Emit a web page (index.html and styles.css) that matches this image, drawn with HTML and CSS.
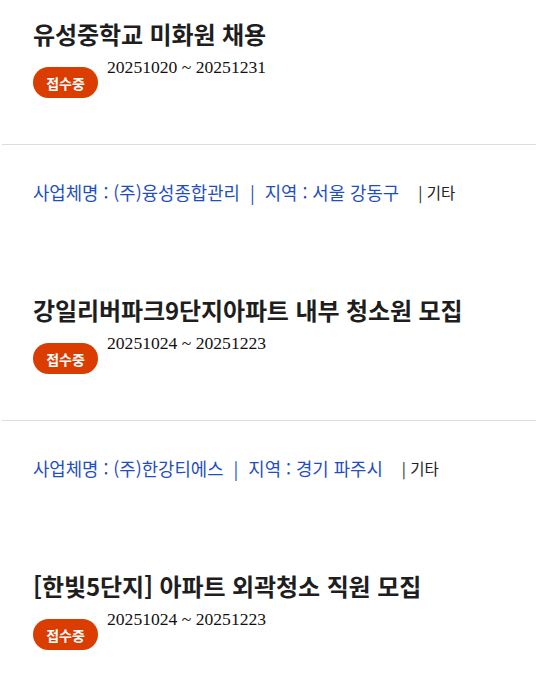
FILE: index.html
```html
<!DOCTYPE html>
<html lang="ko">
<head>
<meta charset="utf-8">
<link rel="stylesheet" href="styles.css">
</head>
<body>
<ul class="list">
  <li class="item">
    <div class="head">
      <h2 class="title">유성중학교 미화원 채용</h2>
      <div class="meta">
        <span class="badge">접수중</span>
        <span class="date">20251020 ~ 20251231</span>
      </div>
    </div>
    <div class="info">
      <span class="blue">사업체명 : (주)융성종합관리</span><span class="blue sep">|</span><span class="blue">지역 : 서울 강동구</span><span class="etc">| 기타</span>
    </div>
  </li>
  <li class="item">
    <div class="head">
      <h2 class="title">강일리버파크9단지아파트 내부 청소원 모집</h2>
      <div class="meta">
        <span class="badge">접수중</span>
        <span class="date">20251024 ~ 20251223</span>
      </div>
    </div>
    <div class="info">
      <span class="blue">사업체명 : (주)한강티에스</span><span class="blue sep">|</span><span class="blue">지역 : 경기 파주시</span><span class="etc">| 기타</span>
    </div>
  </li>
  <li class="item">
    <div class="head">
      <h2 class="title">[한빛5단지] 아파트 외곽청소 직원 모집</h2>
      <div class="meta">
        <span class="badge">접수중</span>
        <span class="date">20251024 ~ 20251223</span>
      </div>
    </div>
  </li>
</ul>
</body>
</html>
```
FILE: styles.css
```css
html, body {
  margin: 0;
  padding: 0;
  background: #fff;
}
.list {
  list-style: none;
  margin: 0;
  padding: 0 2px;
}
.item {
  margin: 0;
}
.head {
  padding: 16px 31px 46px;
  border-bottom: 1px solid #dddddd;
}
.title {
  margin: 0;
  font-family: "Noto Sans CJK KR", "Noto Sans", sans-serif;
  font-weight: 700;
  font-size: 24px;
  line-height: 36px;
  color: #1e1e1e;
  letter-spacing: -0.1px;
}
.meta {
  display: flex;
  align-items: flex-start;
  gap: 9px;
  margin-top: 3px;
}
.badge {
  margin-top: 12px;
  display: inline-flex;
  align-items: center;
  justify-content: center;
  width: 65px;
  height: 31px;
  border-radius: 16px;
  background: #db3d00;
  color: #fff;
  font-family: "Noto Sans CJK KR", sans-serif;
  font-size: 14px;
  font-weight: 700;
}
.date {
  font-family: "Liberation Serif", "Noto Sans CJK KR", serif;
  font-size: 17.6px;
  line-height: 24px;
  color: #111;
}
.info {
  padding: 35px 31px 72px;
  font-family: "Noto Sans CJK KR", sans-serif;
  font-size: 17.8px;
  line-height: 24px;
  display: flex;
  align-items: center;
}
.blue {
  color: #1f4fbf;
}
.sep {
  margin: 0 10px;
}
.etc {
  margin-left: 19px;
  font-size: 15.5px;
  color: #222;
}
```
